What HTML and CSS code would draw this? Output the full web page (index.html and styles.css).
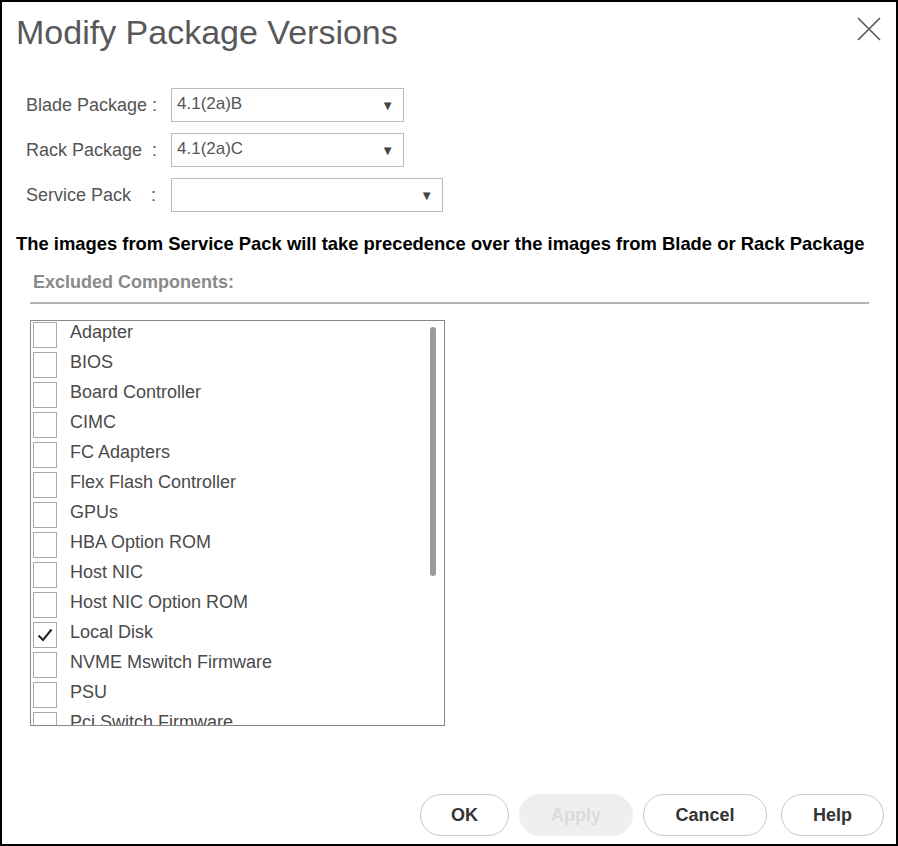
FILE: index.html
```html
<!DOCTYPE html>
<html lang="en">
<head>
    <meta charset="UTF-8">
    <meta name="viewport" content="width=device-width, initial-scale=1.0">
    <title>Modify Package Versions</title>
    <link rel="stylesheet" href="styles.css">
</head>
<body>
    <div class="dialog">
        <div class="dialog-header">
            <h1 class="dialog-title">Modify Package Versions</h1>
            <svg class="close-icon" width="24" height="24" viewBox="0 0 24 24">
                <path d="M1 1 L23 23 M23 1 L1 23" stroke="#555" stroke-width="1.6" fill="none"/>
            </svg>
        </div>

        <div class="package-form">
            <div class="form-row">
                <span class="form-label">Blade Package :</span>
                <div class="select-box">
                    <span>4.1(2a)B</span>
                    <span class="select-arrow">&#9660;</span>
                </div>
            </div>
            <div class="form-row">
                <span class="form-label">Rack Package&nbsp; :</span>
                <div class="select-box">
                    <span>4.1(2a)C</span>
                    <span class="select-arrow">&#9660;</span>
                </div>
            </div>
            <div class="form-row">
                <span class="form-label">Service Pack&nbsp;&nbsp;&nbsp; :</span>
                <div class="select-box wide">
                    <span></span>
                    <span class="select-arrow">&#9660;</span>
                </div>
            </div>
        </div>

        <p class="notice">The images from Service Pack will take precedence over the images from Blade or Rack Package</p>

        <div class="section-title">Excluded Components:</div>
        <div class="section-rule"></div>

        <div class="component-list">
            <div class="component-items" id="componentItems"></div>
            <div class="scroll-thumb"></div>
        </div>

        <div class="dialog-footer">
            <button class="btn btn-ok">OK</button>
            <button class="btn btn-apply" disabled>Apply</button>
            <button class="btn btn-cancel">Cancel</button>
            <button class="btn btn-help">Help</button>
        </div>
    </div>

    <script>
        let components = [
            { name: "Adapter", checked: false },
            { name: "BIOS", checked: false },
            { name: "Board Controller", checked: false },
            { name: "CIMC", checked: false },
            { name: "FC Adapters", checked: false },
            { name: "Flex Flash Controller", checked: false },
            { name: "GPUs", checked: false },
            { name: "HBA Option ROM", checked: false },
            { name: "Host NIC", checked: false },
            { name: "Host NIC Option ROM", checked: false },
            { name: "Local Disk", checked: true },
            { name: "NVME Mswitch Firmware", checked: false },
            { name: "PSU", checked: false },
            { name: "Pci Switch Firmware", checked: false }
        ];

        function buildRow(component) {
            let row = document.createElement("div");
            row.className = "component-row";

            let box = document.createElement("span");
            box.className = "check-box";
            if (component.checked) {
                box.innerHTML = '<svg width="16" height="14" viewBox="0 0 16 14"><path d="M1.5 7.5 L6 12 L14.5 1.5" stroke="#222" stroke-width="2" fill="none"/></svg>';
            }

            let label = document.createElement("span");
            label.className = "component-name";
            label.innerText = component.name;

            row.appendChild(box);
            row.appendChild(label);
            return row;
        }

        let list = document.getElementById("componentItems");
        components.forEach(c => list.appendChild(buildRow(c)));
    </script>
</body>
</html>
```

FILE: styles.css
```css
html, body {
    margin: 0;
    padding: 0;
    background: #fff;
}
body {
    font-family: "Liberation Sans", Arial, sans-serif;
    color: #555;
}
.dialog {
    width: 898px;
    height: 846px;
    box-sizing: border-box;
    border: 2px solid #000;
    display: flex;
    flex-direction: column;
    padding: 0 12px 0 14px;
}
.dialog-header {
    display: flex;
    justify-content: space-between;
    align-items: flex-start;
    padding-top: 10px;
}
.dialog-title {
    margin: 0;
    font-size: 34px;
    line-height: 40px;
    font-weight: normal;
    color: #58585b;
}
.close-icon {
    margin-top: 5px;
    margin-right: 3px;
}
.package-form {
    display: flex;
    flex-direction: column;
    gap: 11px;
    margin-top: 36px;
    padding-left: 10px;
}
.form-row {
    display: flex;
    align-items: center;
}
.form-label {
    width: 145px;
    font-size: 18px;
    color: #555;
    white-space: pre;
}
.select-box {
    width: 233px;
    height: 34px;
    box-sizing: border-box;
    border: 1px solid #bbb;
    display: flex;
    align-items: center;
    justify-content: space-between;
    padding: 0 9px 2px 5px;
    font-size: 17px;
    color: #555;
}
.select-box.wide {
    width: 272px;
}
.select-arrow {
    font-size: 13px;
    color: #444;
    padding-top: 2px;
}
.notice {
    margin: 20px 0 0 0;
    font-size: 18.4px;
    line-height: 24px;
    font-weight: bold;
    color: #000;
}
.section-title {
    margin: 16px 0 0 17px;
    font-size: 18px;
    line-height: 20px;
    font-weight: bold;
    color: #8a8a8a;
}
.section-rule {
    margin: 10px 0 0 14px;
    width: 839px;
    height: 2px;
    background: #b5b5b5;
}
.component-list {
    position: relative;
    margin: 16px 0 0 14px;
    width: 415px;
    height: 406px;
    box-sizing: border-box;
    border: 1px solid #888;
    overflow: hidden;
}
.component-items {
    display: flex;
    flex-direction: column;
    padding: 1px 0 0 2px;
}
.component-row {
    display: flex;
    align-items: flex-start;
    gap: 13px;
    height: 30px;
}
.check-box {
    width: 24px;
    height: 26px;
    box-sizing: border-box;
    border: 1px solid #aaa;
    display: flex;
    align-items: center;
    justify-content: center;
}
.component-name {
    font-size: 18px;
    line-height: 20px;
    color: #4a4a4a;
}
.scroll-thumb {
    position: absolute;
    top: 6px;
    right: 8px;
    width: 6px;
    height: 249px;
    border-radius: 3px;
    background: #9a9a9a;
}
.dialog-footer {
    margin-top: auto;
    margin-bottom: 8px;
    display: flex;
    justify-content: flex-end;
    gap: 10px;
}
.btn {
    height: 42px;
    box-sizing: border-box;
    border: 1px solid #c8c8c8;
    border-radius: 21px;
    background: #fff;
    font-family: "Liberation Sans", Arial, sans-serif;
    font-size: 18px;
    font-weight: bold;
    color: #333;
    padding: 0;
}
.btn-ok {
    width: 89px;
}
.btn-apply {
    width: 114px;
    background: #efefef;
    border-color: #efefef;
    color: #dcdcdc;
}
.btn-cancel {
    width: 124px;
}
.btn-help {
    width: 103px;
    margin-left: 4px;
}
```
